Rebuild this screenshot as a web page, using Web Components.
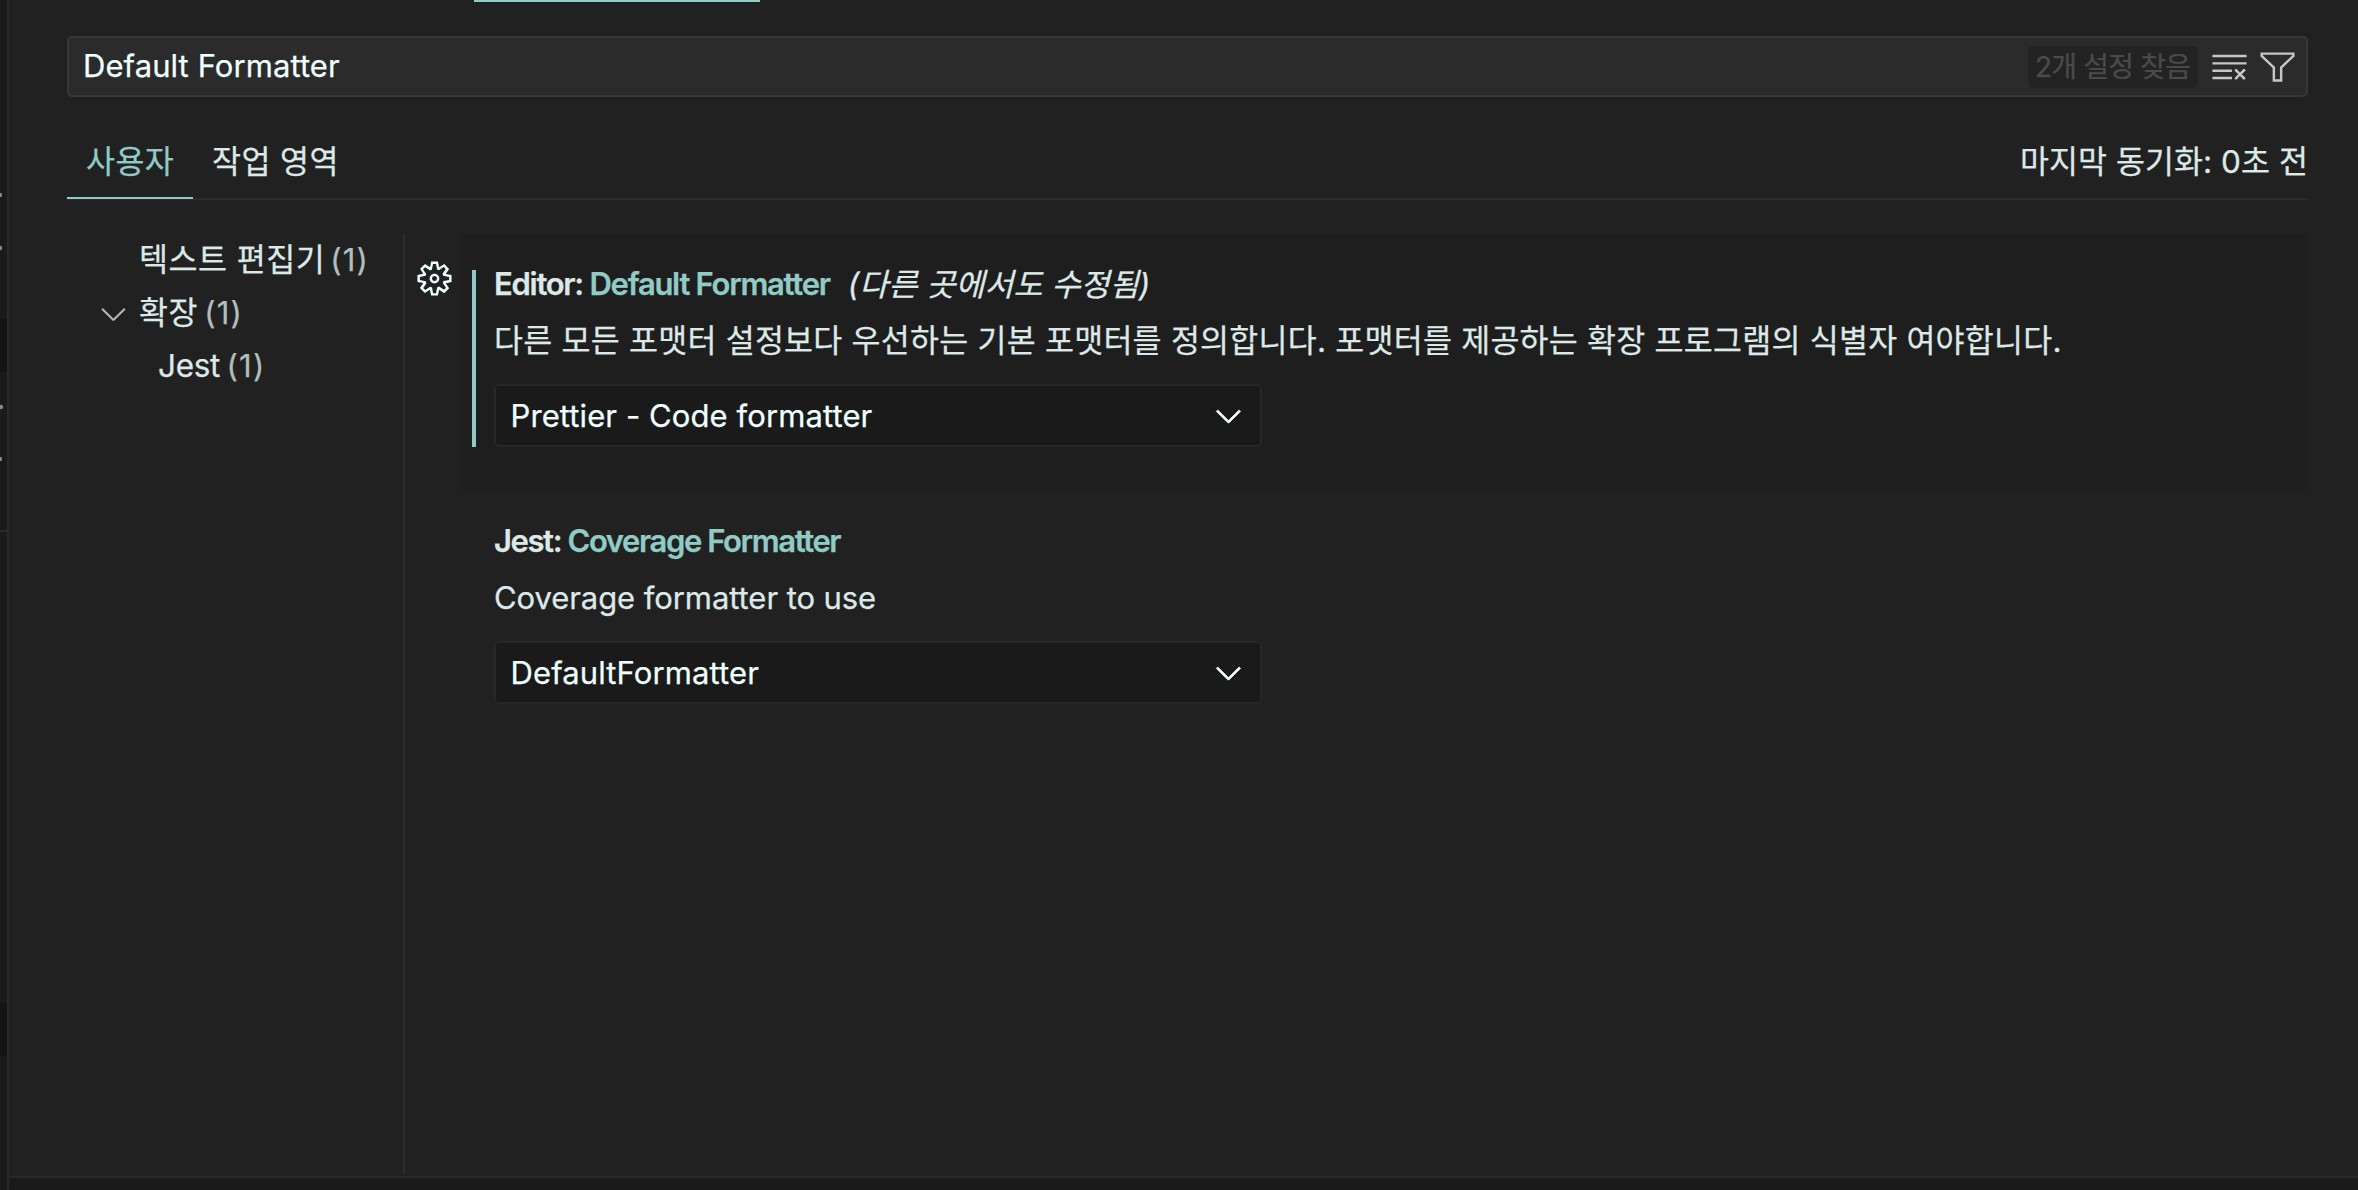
<!DOCTYPE html>
<html lang="ko">
<head>
<meta charset="utf-8">
<title>Settings</title>
<style>
  html, body { margin: 0; height: 100%; background: #212121; overflow: hidden; }
  body {
    font: 400 31px/38px Inter, "Noto Sans CJK KR", sans-serif;
    color: #dde8e7;
    -webkit-text-stroke: .25px currentColor;
    --accent: #91cbc5;
    --bright: #f0ffff;
    --line: #2c2c2c;
  }
</style>
</head>
<body>
<wb-window>
  <wb-search value="Default Formatter" count="2개 설정 찾음"></wb-search>
  <wb-tabs status="마지막 동기화: 0초 전">
    <wb-tab active>사용자</wb-tab>
    <wb-tab>작업 영역</wb-tab>
  </wb-tabs>
  <wb-settings>
    <wb-toc-item slot="toc" count="(1)" style="--indent:72px;--ls:.5px">텍스트 편집기</wb-toc-item>
    <wb-toc-item slot="toc" count="(1)" expanded style="--indent:72px;--ls:.4px;--gap:6.5px">확장</wb-toc-item>
    <wb-toc-item slot="toc" count="(1)" style="--indent:91px;--ls:-.3px;--gap:6.5px">Jest</wb-toc-item>
    <wb-setting category="Editor:" label="Default Formatter" note="(다른 곳에서도 수정됨)" focused style="--title-ls:-1.28px">
      <span style="letter-spacing:.225px">다른 모든 포맷터 설정보다 우선하는 기본 포맷터를 정의합니다. 포맷터를 제공하는 확장 프로그램의 식별자 여야합니다.</span>
      <wb-select slot="control" style="letter-spacing:.1px">Prettier - Code formatter</wb-select>
    </wb-setting>
    <wb-setting category="Jest:" label="Coverage Formatter" style="--title-ls:-1.41px;--desc-size:31px">
      <span style="letter-spacing:-.07px">Coverage formatter to use</span>
      <wb-select slot="control" style="letter-spacing:.12px">DefaultFormatter</wb-select>
    </wb-setting>
  </wb-settings>
</wb-window>

<script>
const ICONS = {
  gear: 'M9.1 4.4L8.6 2H7.4l-.5 2.4-.7.3-2-1.3-.9.8 1.3 2-.2.7-2.4.5v1.2l2.4.5.3.8-1.3 2 .8.8 2-1.3.8.3.4 2.3h1.2l.5-2.4.8-.3 2 1.3.8-.8-1.3-2 .3-.8 2.3-.4V7.4l-2.4-.5-.3-.8 1.3-2-.8-.8-2 1.3-.7-.2zM9.4 1l.5 2.4L12 2.1l2 2-1.4 2.1 2.4.4v2.8l-2.4.5L14 12l-2 2-2.1-1.4-.5 2.4H6.6l-.5-2.4L4 13.9l-2-2 1.4-2.1L1 9.4V6.6l2.4-.5L2.1 4l2-2 2.1 1.4.4-2.4h2.8zm.6 7c0 1.1-.9 2-2 2s-2-.9-2-2 .9-2 2-2 2 .9 2 2zM8 9c.6 0 1-.4 1-1s-.4-1-1-1-1 .4-1 1 .4 1 1 1z',
  clear: 'M10 12.6l.7.7 1.6-1.6 1.6 1.6.8-.7L13 11l1.7-1.6-.8-.8-1.6 1.7-1.6-1.7-.7.8 1.6 1.6-1.6 1.6zM1 4h14V3H1v1zm0 3h14V6H1v1zm8 2.5V9H1v1h8v-.5zM9 13v-1H1v1h8z',
  filter: 'M15 2v1.67l-5 4.759V14H6V8.429l-5-4.76V2h14zM7 8v5h2V8l5-4.76V3H2v.24L7 8z',
  chevron: 'M7.976 10.072l4.357-4.357.62.618L8.284 11h-.618L3 6.333l.619-.618 4.357 4.357z'
};

class Base extends HTMLElement {
  connectedCallback() {
    if (this.shadowRoot) return;
    this.attachShadow({ mode: 'open' }).innerHTML = this.view();
  }
  attr(n) { return this.getAttribute(n) || ''; }
}

customElements.define('wb-icon', class extends Base {
  view() {
    return `<style>
      :host { display: block; flex: none; width: 39px; height: 39px; }
      svg { display: block; width: 100%; height: 100%; fill: currentColor; fill-rule: evenodd;
        stroke: currentColor; stroke-width: var(--icon-stroke, 0); stroke-linejoin: round; }
    </style><svg viewBox="0 0 16 16"><path d="${ICONS[this.attr('name')]}"/></svg>`;
  }
});

customElements.define('wb-strip', class extends Base {
  view() {
    return `<style>
      :host { display: block; box-sizing: border-box; width: 9px; flex: none; background: #1a1a1a; border-right: 2px solid #2a2a2a; }
      svg { display: block; }
    </style>
    <svg width="7" height="1190" fill="#8a8a8a">
      <path fill="#141414" d="M0 319h7v53H0zM0 1003h7v53H0z"/>
      <path fill="#2a2a2a" d="M0 530h7v2H0z"/>
      <circle cx="0" cy="195" r="2.2"/><circle cx="0" cy="248" r="2.2"/>
      <circle cx="1" cy="407" r="2.2"/><circle cx="0" cy="459" r="2.2"/>
    </svg>`;
  }
});

customElements.define('wb-window', class extends Base {
  view() {
    return `<style>
      :host { display: flex; height: 1190px; }
      main { flex: 1; display: flex; flex-direction: column; min-width: 0; }
      .tab-mark { height: 2px; width: 286px; margin: 0 0 34px 465px; background: var(--accent); }
      .editor { height: 1140px; padding: 0 50px 0 58px; }
      .panel { flex: 1; border-top: 2px solid #292929; background: #1b1a1a; }
    </style>
    <wb-strip></wb-strip>
    <main><div class="tab-mark"></div><div class="editor"><slot></slot></div><div class="panel"></div></main>`;
  }
});

customElements.define('wb-search', class extends Base {
  view() {
    return `<style>
      :host { display: flex; align-items: center; box-sizing: border-box; height: 61px;
        border: 2px solid #373737; border-radius: 5px; background: #2b2b2b; padding: 0 9px 0 14px; }
      .value { flex: 1; color: var(--bright); height: 39px; letter-spacing: .08px; }
      .count { background: #232323; color: #4a4a4a; border-radius: 5px; height: 42px; line-height: 43px; width: 170px;
        padding-left: 7px; box-sizing: border-box; font-size: 28px; letter-spacing: -.8px; white-space: nowrap; margin-right: 12px; }
      wb-icon { color: #c6c6c6; height: 40px; }
      wb-icon + wb-icon { margin-left: 9px; }
    </style>
    <span class="value">${this.attr('value')}</span>
    <span class="count">${this.attr('count')}</span>
    <wb-icon name="clear"></wb-icon><wb-icon name="filter"></wb-icon>`;
  }
});

customElements.define('wb-tabs', class extends Base {
  view() {
    return `<style>
      :host { display: flex; align-items: flex-start; box-sizing: border-box; height: 75px; margin-top: 28px;
        border-bottom: 2px solid var(--line); font-size: 31.5px; line-height: 73px; white-space: nowrap; }
      .status { margin-left: auto; letter-spacing: .05px; }
    </style><slot></slot><span class="status">${this.attr('status')}</span>`;
  }
});

customElements.define('wb-tab', class extends Base {
  view() {
    return `<style>
      :host { display: block; box-sizing: border-box; height: 74px; padding: 0 0 0 19px; letter-spacing: .4px; border-bottom: 2px solid transparent; }
      :host([active]) { width: 126px; color: var(--accent); border-color: var(--accent); }
    </style><slot></slot>`;
  }
});

customElements.define('wb-settings', class extends Base {
  view() {
    return `<style>
      :host { display: flex; height: 940px; margin-top: 34px; }
      nav { box-sizing: border-box; width: 338px; flex: none; border-right: 2px solid var(--line); }
      section { flex: 1; min-width: 0; }
    </style><nav><slot name="toc"></slot></nav><section><slot></slot></section>`;
  }
});

customElements.define('wb-toc-item', class extends Base {
  view() {
    return `<style>
      :host { display: flex; align-items: center; height: 53px; line-height: 52px; white-space: nowrap; }
      .twist { box-sizing: border-box; width: var(--indent); flex: none; padding-left: 26.5px; color: #b5b5b5; }
      .label { font-size: 31.5px; letter-spacing: var(--ls); height: 53px; }
      .count { height: 53px; margin-left: var(--gap, 5px); color: #b3bebb; letter-spacing: 1.2px; }
    </style>
    <span class="twist">${this.hasAttribute('expanded') ? '<wb-icon name="chevron"></wb-icon>' : ''}</span>
    <span class="label"><slot></slot></span><span class="count">${this.attr('count')}</span>`;
  }
});

customElements.define('wb-setting', class extends Base {
  view() {
    return `<style>
      :host { display: flex; height: 257px; white-space: nowrap; }
      .gutter { box-sizing: border-box; width: 55px; flex: none; padding: 25px 0 0 9.5px; color: var(--bright); }
      .body { box-sizing: border-box; flex: 1; height: 256px; padding: 36px 0 0 12px; }
      :host([focused]) .body { background: #1e1e1e; }
      .inner { box-sizing: border-box; height: 177px; border-left: 4px solid transparent; padding-left: 18px; }
      :host([focused]) .inner { border-color: var(--accent); }
      .title { display: flex; height: 28px; line-height: 28px; font-weight: 600; letter-spacing: var(--title-ls); white-space: pre; }
      .label { color: var(--accent); }
      .note { font: italic 400 31.5px/30px Inter, "Noto Sans CJK KR", sans-serif; letter-spacing: .08px; margin-left: 18px; }
      .desc { height: 36px; line-height: 36px; margin: 25px 0; font-size: var(--desc-size, 31.5px); }
    </style>
    <div class="gutter">${this.hasAttribute('focused') ? '<wb-icon name="gear"></wb-icon>' : ''}</div>
    <div class="body"><div class="inner">
      <div class="title"><span>${this.attr('category')} </span><span class="label">${this.attr('label')}</span>${this.attr('note') ? `<span class="note">${this.attr('note')}</span>` : ''}</div>
      <div class="desc"><slot></slot></div>
      <slot name="control"></slot>
    </div></div>`;
  }
});

customElements.define('wb-select', class extends Base {
  view() {
    return `<style>
      :host { display: flex; align-items: center; justify-content: space-between; box-sizing: border-box;
        width: 768px; height: 63px; border: 2px solid #272727; border-radius: 5px; background: #1a1a1a;
        color: var(--bright); padding: 0 12px 0 14.5px; }
      wb-icon { --icon-stroke: .3; margin-bottom: 1px; }
    </style><span><slot></slot></span><wb-icon name="chevron"></wb-icon>`;
  }
});
</script>
</body>
</html>
